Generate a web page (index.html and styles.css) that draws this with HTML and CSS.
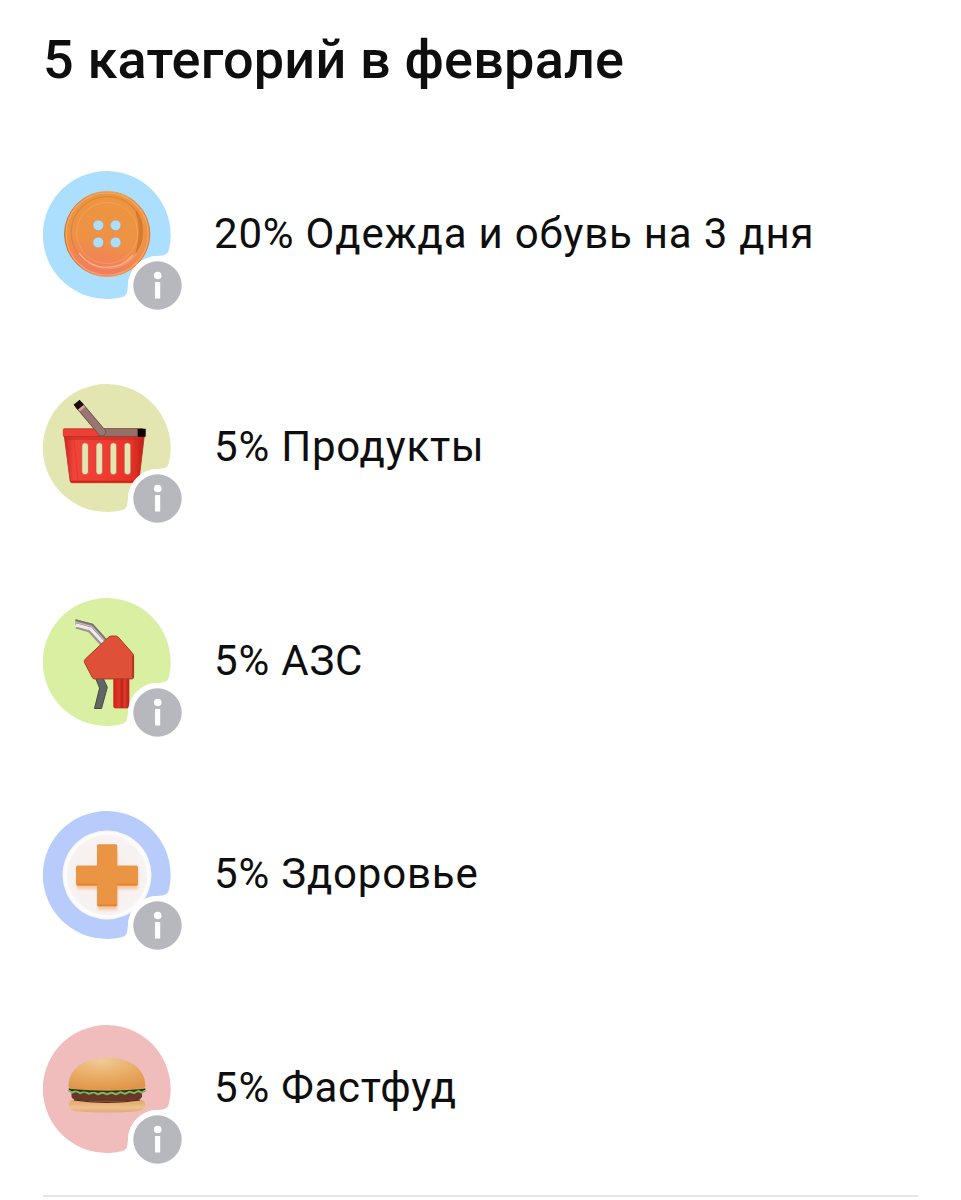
FILE: index.html
```html
<!DOCTYPE html>
<html lang="ru">
<head>
  <meta charset="UTF-8">
  <title>Категории</title>
  <link rel="stylesheet" href="styles.css">
</head>
<body>
  <!-- Shared shapes -->
  <svg class="defs" width="0" height="0">
    <symbol id="disc" viewBox="0 0 144 144">
      <path fill="currentColor" d="M64 0A64 64 0 1 0 78.500 126.300Q83.600 125.300 84.200 120.500L85 114.500A29.500 29.500 0 0 1 114.500 85L119.500 84.400Q124.700 83.800 125.900 79A64 64 0 0 0 64 0Z"/>
    </symbol>
    <symbol id="info" viewBox="0 0 144 144">
      <circle cx="114.500" cy="114.500" r="29.500" fill="#fff"/>
      <circle cx="114.500" cy="114.500" r="24.200" fill="#b7b7be"/>
      <circle cx="114.700" cy="104.500" r="3.800" fill="#fff"/>
      <rect x="112" y="111" width="5.200" height="16.500" rx=".5" fill="#fff"/>
    </symbol>
  </svg>

  <main class="container">
    <h1>5 категорий в феврале</h1>

    <ul class="categories">
      <li class="category">
        <svg class="icon clothes" viewBox="0 0 144 144">
          <defs>
            <linearGradient id="btnFace" x1="0.600" y1="0" x2="0.400" y2="1">
              <stop offset="0" stop-color="#ec963f"/>
              <stop offset=".6" stop-color="#ee9145"/>
              <stop offset="1" stop-color="#f47866"/>
            </linearGradient>
            <linearGradient id="btnRim" x1="0" y1="0" x2="1" y2="0">
              <stop offset="0" stop-color="#b8702c"/>
              <stop offset=".5" stop-color="#f2a55a"/>
              <stop offset="1" stop-color="#d9752e"/>
            </linearGradient>
            <linearGradient id="btnGroove" x1="0" y1="0" x2="1" y2="1">
              <stop offset="0" stop-color="#d98a3c"/>
              <stop offset=".5" stop-color="#d97f35"/>
              <stop offset="1" stop-color="#fbad80"/>
            </linearGradient>
          </defs>
          <use href="#disc"/>
          <circle cx="64.200" cy="63" r="42.600" fill="url(#btnFace)" stroke="url(#btnRim)" stroke-width="1"/>
          <circle cx="64.200" cy="63" r="41" fill="none" stroke="#f8b06c" stroke-width="1.200" opacity=".7"/>
          <circle cx="64.200" cy="61.500" r="36" fill="none" stroke="url(#btnGroove)" stroke-width="1.200"/>
          <path d="M93 40A37 37 0 0 1 93 82Q100 60 93 40Z" fill="#cd7025" stroke="#cd7025" stroke-width="1.500" opacity=".7"/>
          <circle cx="64.200" cy="62" r="30.500" fill="none" stroke="#f7a86c" stroke-width="1" opacity=".6"/>
          <path d="M36 82A34 34 0 0 0 90 84" fill="none" stroke="#ffb08f" stroke-width="1.300"/>
          <g fill="#abdffd" stroke="#cf9867" stroke-width=".8">
            <circle cx="55.300" cy="54.300" r="5.400"/>
            <circle cx="72.600" cy="54.300" r="5.400"/>
            <circle cx="55.300" cy="71.400" r="5.400"/>
            <circle cx="72.600" cy="71.400" r="5.400"/>
          </g>
          <use href="#info"/>
        </svg>
        <span class="name">20% Одежда и обувь на 3 дня</span>
      </li>

      <li class="category">
        <svg class="icon grocery" viewBox="0 0 144 144">
          <defs>
            <linearGradient id="basket" x1="0" y1="0" x2="1" y2="0">
              <stop offset="0" stop-color="#c92a20"/>
              <stop offset=".12" stop-color="#f0443a"/>
              <stop offset=".5" stop-color="#f03c32"/>
              <stop offset=".86" stop-color="#e83128"/>
              <stop offset="1" stop-color="#b52018"/>
            </linearGradient>
          </defs>
          <use href="#disc"/>
          <path d="M21.300 52H101.300L95.900 97Q95.600 98.700 94 98.700H29Q27.400 98.700 27.100 97Z" fill="url(#basket)" stroke="#c1281e" stroke-width=".8"/>
          <path d="M22 52.500H101L100.500 56H22.500Z" fill="#c6291f" opacity=".5"/>
          <path d="M31 54L35 98M93 54L88.500 98" stroke="#ca2b21" stroke-width="1" opacity=".4"/>
          <path d="M28 97.500H95" stroke="#cc2219" stroke-width="1.500"/>
          <rect x="20.300" y="44.700" width="80" height="7.800" rx="1" fill="#ea4036" stroke="#b92a21" stroke-width=".7"/>
          <path d="M58 44.700H95V52.300H58Z" fill="#94706b" stroke="#69504c" stroke-width=".6"/>
          <rect x="94.700" y="44.700" width="8" height="8" rx=".5" fill="#0c0504"/>
          <path d="M35.500 20.500L58.700 48" stroke="#6d504d" stroke-width="8.200"/>
          <circle cx="58.700" cy="48" r="4.100" fill="#6d504d"/>
          <path d="M36.500 21.600L58.700 48" stroke="#987672" stroke-width="6.800"/>
          <circle cx="58.700" cy="48" r="3.400" fill="#987672"/>
          <path d="M37.500 22.900L39.500 25.300" stroke="#dba39a" stroke-width="6.800"/>
          <path d="M33.600 18.300L37.700 23.200" stroke="#15100b" stroke-width="8"/>
          <g fill="#e4e6b2" stroke="#c5483b" stroke-width=".7">
            <rect x="38.800" y="58.700" width="6.600" height="32" rx="3.300"/>
            <rect x="53" y="58.700" width="6.600" height="32" rx="3.300"/>
            <rect x="67.100" y="58.700" width="6.600" height="32" rx="3.300"/>
            <rect x="81.200" y="58.700" width="6.600" height="32" rx="3.300"/>
          </g>
          <use href="#info"/>
        </svg>
        <span class="name">5% Продукты</span>
      </li>

      <li class="category">
        <svg class="icon fuel" viewBox="0 0 144 144">
          <defs>
            <linearGradient id="grip" x1="0" y1="0" x2="1" y2="0">
              <stop offset="0" stop-color="#d2231a"/>
              <stop offset=".35" stop-color="#e1362a"/>
              <stop offset=".55" stop-color="#b8231a"/>
              <stop offset=".7" stop-color="#e43a2c"/>
              <stop offset="1" stop-color="#b72017"/>
            </linearGradient>
          </defs>
          <use href="#disc"/>
          <path d="M32.500 21.300L50 26L66 44L58 48L45.500 34.300L32.500 30.500L34 28L32.300 26.500Z" fill="#9c9492"/>
          <path d="M32.500 22L49.500 26.500L64 42.500" fill="none" stroke="#79716d" stroke-width="1.500"/>
          <path d="M33 27L47.500 31L60.500 45" fill="none" stroke="#f3e9eb" stroke-width="3.200"/>
          <path d="M33 24.300L49 28.500L62 43" fill="none" stroke="#c5bfc0" stroke-width="1"/>
          <path d="M54 80H60L64.300 89.300L58.500 110.500H51.500L56.600 90L52.500 80Z" fill="#626664" stroke="#454947" stroke-width="1"/>
          <rect x="70.700" y="78" width="15.300" height="32" rx="1.500" fill="url(#grip)" stroke="#c9291d" stroke-width=".7"/>
          <path d="M65.500 39.300Q67 38 69 38H72.500Q74.300 38 75.500 39.400L89.500 55.300Q90.600 56.500 90.600 58V79Q90.600 80.900 88.700 80.900H51.500Q50 80.900 49.300 79.500L41.500 64.500Q40.700 62.700 42.200 61.200Z" fill="#df5038" stroke="#a93b25" stroke-width="1"/>
          <path d="M89.900 58V79.500" stroke="#b62b1d" stroke-width="1.300"/>
          <use href="#info"/>
        </svg>
        <span class="name">5% АЗС</span>
      </li>

      <li class="category">
        <svg class="icon health" viewBox="0 0 144 144">
          <defs>
            <radialGradient id="pill">
              <stop offset="0" stop-color="#f7ece8"/>
              <stop offset=".87" stop-color="#f7f3f3"/>
              <stop offset=".94" stop-color="#fffdfc"/>
              <stop offset="1" stop-color="#f3f4fd"/>
            </radialGradient>
            <filter id="soft"><feGaussianBlur stdDeviation="1.500"/></filter>
          </defs>
          <use href="#disc"/>
          <circle cx="64" cy="64" r="44.500" fill="url(#pill)"/>
          <path d="M55 40H74V58H95V78H74V99H55V78H34V58H55Z" fill="#f3b88b" opacity=".75" filter="url(#soft)"/>
          <path d="M55.500 33.300H72.800Q74.300 33.300 74.300 34.800V54.500H93.500Q95 54.500 95 56V73Q95 74.700 93.500 74.700H74.300V94Q74.300 95.500 72.800 95.500H55.500Q54 95.500 54 94V74.700H34.500Q33 74.700 33 73V56Q33 54.500 34.500 54.500H54V34.800Q54 33.300 55.500 33.300Z" fill="#ea9544"/>
          <path d="M34 73.500H54.500M74 73.500H94M55 94.300H73.500" stroke="#e98124" stroke-width="1.600"/>
          <use href="#info"/>
        </svg>
        <span class="name">5% Здоровье</span>
      </li>

      <li class="category">
        <svg class="icon fastfood" viewBox="0 0 144 144">
          <defs>
            <radialGradient id="bun" cx=".42" cy=".08" r=".9">
              <stop offset="0" stop-color="#edcc9a"/>
              <stop offset=".45" stop-color="#eab26c"/>
              <stop offset="1" stop-color="#e0964a"/>
            </radialGradient>
            <linearGradient id="bunBottom" x1="0" y1="0" x2="0" y2="1">
              <stop offset="0" stop-color="#dfa569"/>
              <stop offset=".6" stop-color="#efc08a"/>
              <stop offset="1" stop-color="#dba97a"/>
            </linearGradient>
          </defs>
          <use href="#disc"/>
          <path d="M30 75H98Q102.300 75.500 102.300 79.500Q102.300 85 95 86.300Q64 88.800 33 86.300Q25.700 85 25.700 79.500Q25.700 75.500 30 75Z" fill="url(#bunBottom)"/>
          <path d="M28.500 66H99V71.500Q98 74.500 94 75.300Q64 78.300 34 75.300Q29 74.500 28.500 71.500Z" fill="#693727"/>
          <path d="M31 75Q64 80 97 75" fill="none" stroke="#4a2219" stroke-width="1"/>
          <path d="M25.500 63.500H102.500L101.500 67H27Z" fill="#263a18"/>
          <path d="M25.800 65.500L29 67.500L33 66L37 68.200L41.500 66.600L46 68.800L50.500 67.200L55 69.300L59.500 67.500L64 69.400L68.500 67.500L73 69.300L77.500 67.200L82 68.800L86.500 66.600L91 68.200L95 66L99 67.500L102.200 65.500" fill="none" stroke="#7aba5c" stroke-width="1.900" stroke-linejoin="round" stroke-linecap="round"/>
          <path d="M26 64.300Q45 67.500 64 66.300T102 64.300" fill="none" stroke="#24380f" stroke-width="1"/>
          <path d="M25.500 60.500C26 45 39 32.800 64 32.800S102 45 102.300 60.500Q102.300 63.200 99 63.900Q64 67.500 28.500 63.900Q25.500 63.200 25.500 60.500Z" fill="url(#bun)"/>
          <use href="#info"/>
        </svg>
        <span class="name">5% Фастфуд</span>
      </li>
    </ul>
  </main>
</body>
</html>
```
FILE: styles.css
```css
* {
  box-sizing: border-box;
}

body {
  margin: 0;
  height: 1200px;
  overflow: hidden;
  background: #fff;
  color: #0e0e0f;
  font-family: Roboto, sans-serif;
}

.defs {
  display: block;
}

.container {
  padding: 28px 43px 0;
}

h1 {
  margin: 0;
  font-size: 54px;
  line-height: 64px;
  font-weight: 500;
  letter-spacing: 0.2px;
}

.categories {
  list-style: none;
  margin: 78.800px 0 0;
  padding: 0;
  height: 1026px;
  border-bottom: 2px solid #e6e6e8;
}

.category {
  display: flex;
  align-items: flex-start;
  gap: 27px;
  height: 213.500px;
}

.icon {
  flex: none;
  width: 144px;
  height: 144px;
}

.name {
  font-size: 42px;
  line-height: 126px;
  letter-spacing: 0.800px;
  white-space: nowrap;
}

/* Disc colors */
.clothes {
  color: #abdffd;
}

.grocery {
  color: #e4e6b2;
}

.fuel {
  color: #d9efa1;
}

.health {
  color: #b8ccfc;
}

.fastfood {
  color: #f0bcbc;
}
```
